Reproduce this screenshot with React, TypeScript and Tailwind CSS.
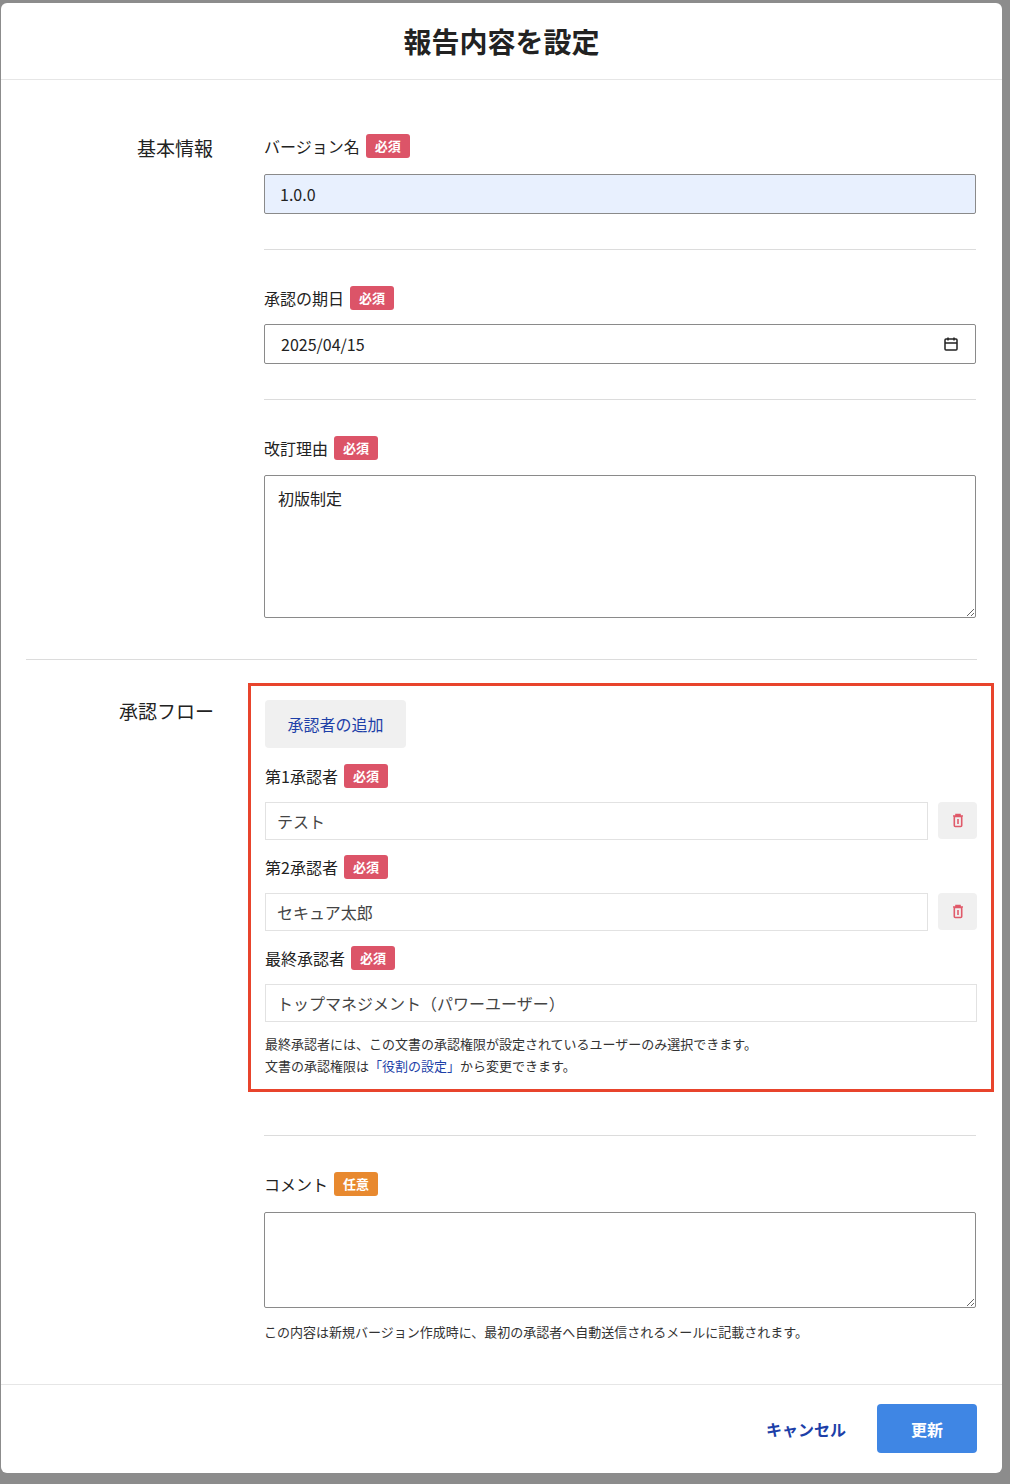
import React from "react";

const F = { fontFamily: '"Noto Sans CJK JP","Noto Sans",sans-serif' };

function Badge({ opt }: { opt?: boolean }) {
  return (
    <span className={`ml-[6px] inline-flex h-[24px] items-center rounded-[3px] px-[9px] text-[13px] font-bold text-white ${opt ? "bg-[#e8892f]" : "bg-[#dc5468]"}`}>
      {opt ? "任意" : "必須"}
    </span>
  );
}

function Label({ t, opt }: { t: string; opt?: boolean }) {
  return (
    <div className="flex h-[24px] items-center text-[16px] text-[#222]">
      {t}
      <Badge opt={opt} />
    </div>
  );
}

function Trash() {
  return (
    <div className="flex h-[37px] w-[39px] shrink-0 items-center justify-center rounded-[4px] bg-[#f0f0f0]">
      <svg width="12" height="15" viewBox="0 0 12 15" fill="none" stroke="#e05a6a" strokeWidth="1.6">
        <path d="M1 3h10M4 3V1.5h4V3" />
        <rect x="2.3" y="3.5" width="7.4" height="10" rx="1" />
        <path d="M6 6v5" />
      </svg>
    </div>
  );
}

export default function App() {
  return (
    <div className="min-h-[1484px] w-[1010px] bg-[#8c8c8c] pt-[3px]" style={F}>
      <div className="ml-[1px] w-[1001px] overflow-hidden rounded-[6px] bg-white">
        <div className="flex h-[77px] items-center justify-center border-b border-[#e6e6e6]">
          <h1 className="text-[28px] font-bold text-[#222]">報告内容を設定</h1>
        </div>

        <div className="px-[25px]">
          <div className="flex border-b border-[#dcdcdc] pb-[41px] pt-[54px]">
            <div className="w-[188px] pr-[1px] text-right text-[19px] text-[#222]">基本情報</div>
            <div className="ml-[50px] flex w-[712px] flex-col">
              <Label t="バージョン名" />
              <div className="mt-[16px] flex h-[40px] items-center rounded-[2px] border border-[#8a8a8a] bg-[#e8f0fe] px-[15px] text-[16px] text-[#222]">1.0.0</div>
              <div className="mt-[35px] border-t border-[#dcdcdc]" />
              <div className="mt-[36px]"><Label t="承認の期日" /></div>
              <div className="mt-[14px] flex h-[40px] items-center justify-between rounded-[2px] border border-[#8a8a8a] px-[16px] text-[16px] text-[#222]">
                <span>2025/04/15</span>
                <svg width="16" height="16" viewBox="0 0 16 16" fill="none" stroke="#222" strokeWidth="1.5">
                  <rect x="2" y="3" width="12" height="11" rx="1" />
                  <path d="M2 7h12M5 1.5v3M11 1.5v3" />
                </svg>
              </div>
              <div className="mt-[35px] border-t border-[#dcdcdc]" />
              <div className="mt-[36px]"><Label t="改訂理由" /></div>
              <textarea defaultValue="初版制定" className="mt-[15px] h-[143px] rounded-[2px] border border-[#8a8a8a] px-[13px] py-[10px] text-[16px] text-[#222]" style={F} />
            </div>
          </div>

          <div className="mr-[-40px] flex pt-[23px]">
            <div className="w-[188px] shrink-0 pt-[14px] text-right text-[19px] text-[#222]">承認フロー</div>
            <div className="ml-[34px] flex w-[746px] shrink-0 flex-col border-[3px] border-[#e8442c] px-[14px] pb-[12px] pt-[14px]">
              <button className="flex h-[48px] w-[141px] items-center justify-center rounded-[4px] bg-[#f0f0f0] text-[16px] text-[#1d3fa8]">承認者の追加</button>
              <div className="mt-[16px]"><Label t="第1承認者" /></div>
              <div className="mt-[14px] flex gap-[10px]">
                <div className="flex h-[38px] flex-1 items-center border border-[#e2e2e2] px-[11px] text-[16px] text-[#444]">テスト</div>
                <Trash />
              </div>
              <div className="mt-[15px]"><Label t="第2承認者" /></div>
              <div className="mt-[14px] flex gap-[10px]">
                <div className="flex h-[38px] flex-1 items-center border border-[#e2e2e2] px-[11px] text-[16px] text-[#444]">セキュア太郎</div>
                <Trash />
              </div>
              <div className="mt-[15px]"><Label t="最終承認者" /></div>
              <div className="mt-[14px] flex h-[38px] items-center border border-[#e2e2e2] px-[11px] text-[16px] text-[#444]">トップマネジメント（パワーユーザー）</div>
              <p className="mt-[11px] text-[13px] leading-[22px] text-[#333]">
                最終承認者には、この文書の承認権限が設定されているユーザーのみ選択できます。
                <br />
                文書の承認権限は<span className="text-[#1d3fa8]">「役割の設定」</span>から変更できます。
              </p>
            </div>
          </div>

          <div className="ml-[238px] w-[712px] pb-[42px]">
            <div className="mt-[43px] border-t border-[#dcdcdc]" />
            <div className="mt-[36px]"><Label t="コメント" opt /></div>
            <textarea className="mt-[16px] h-[96px] w-full rounded-[2px] border border-[#8a8a8a]" />
            <p className="mt-[9px] text-[13px] text-[#333]">この内容は新規バージョン作成時に、最初の承認者へ自動送信されるメールに記載されます。</p>
          </div>
        </div>

        <div className="flex h-[89px] items-center justify-end gap-[31px] border-t border-[#e6e6e6] pr-[25px]">
          <span className="text-[16px] font-bold text-[#1d3fa8]">キャンセル</span>
          <button className="h-[49px] w-[100px] rounded-[4px] bg-[#3f86e4] text-[16px] font-bold text-white">更新</button>
        </div>
      </div>
    </div>
  );
}
